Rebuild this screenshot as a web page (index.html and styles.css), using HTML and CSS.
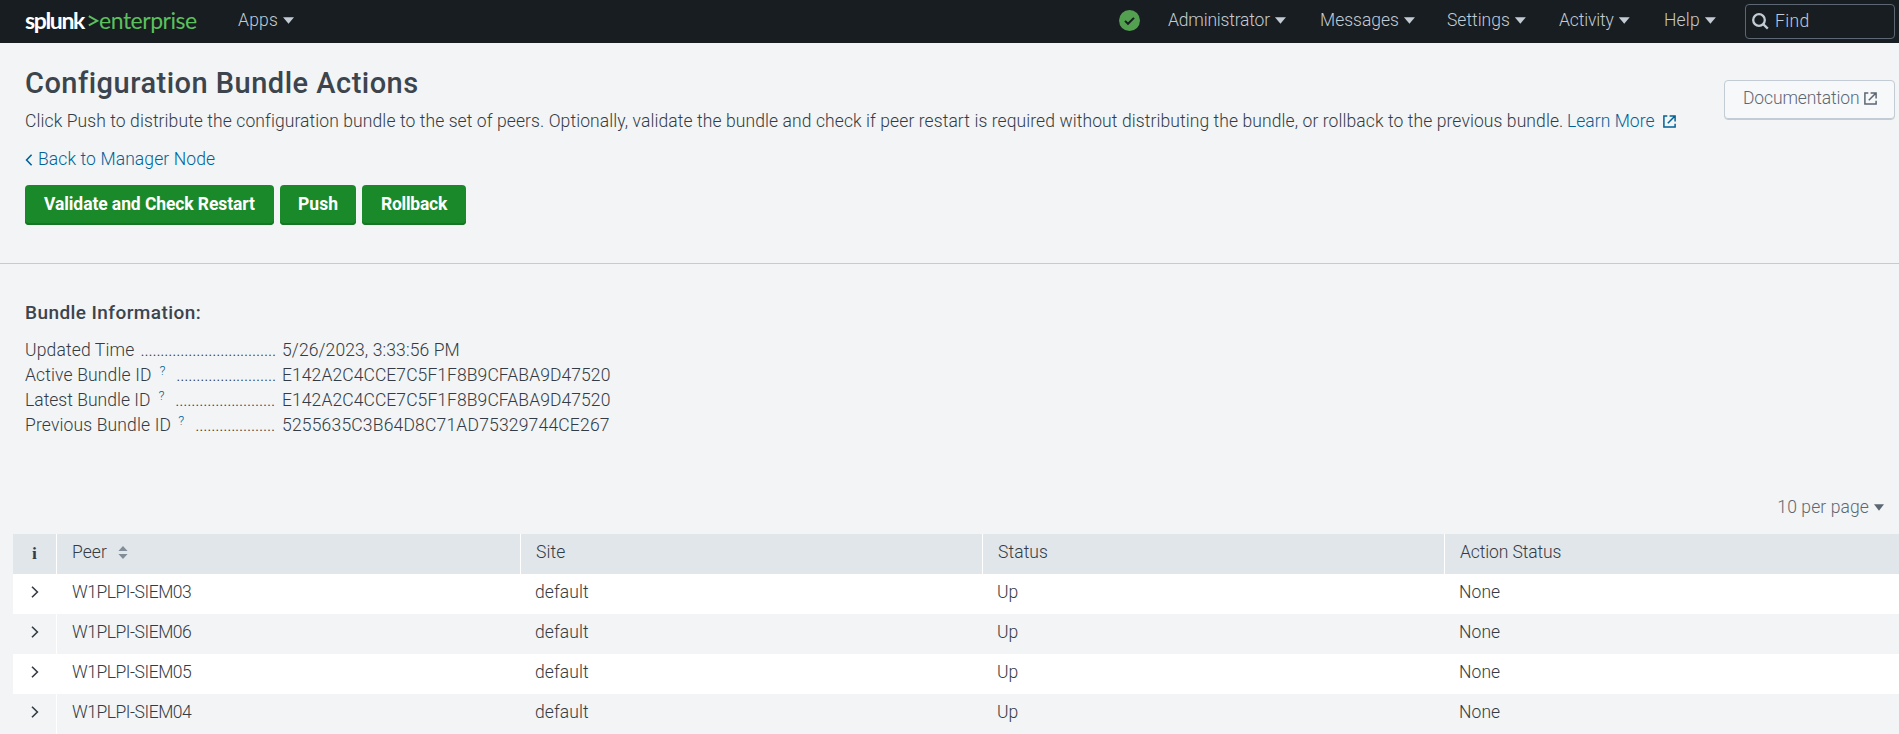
FILE: index.html
```html
<!DOCTYPE html>
<html lang="en">
<head>
<meta charset="utf-8">
<title>Configuration Bundle Actions | Splunk</title>
<link rel="stylesheet" href="styles.css">
</head>
<body>
<header class="navbar">
  <a class="logo"><span class="logo-name">splunk</span><svg class="logo-mark" viewBox="0 0 11 12"><path d="M.8 1.2 9.3 5.8.8 10.4" /></svg><span class="logo-product">enterprise</span></a>
  <a class="nav-item nav-apps"><span class="t-apps">Apps</span><i class="caret"></i></a>
  <svg class="health" viewBox="0 0 21 21"><circle cx="10.5" cy="10.5" r="10.5"/><path d="M6 10.9 9 13.8 15 7.9"/></svg>
  <a class="nav-item nav-admin"><span class="t-admin">Administrator</span><i class="caret"></i></a>
  <a class="nav-item nav-messages"><span>Messages</span><i class="caret"></i></a>
  <a class="nav-item nav-settings"><span class="t-settings">Settings</span><i class="caret"></i></a>
  <a class="nav-item nav-activity"><span class="t-activity">Activity</span><i class="caret"></i></a>
  <a class="nav-item nav-help"><span class="t-help">Help</span><i class="caret"></i></a>
  <div class="find"><svg class="find-icon" viewBox="0 0 17 17"><circle cx="7" cy="7" r="5.8"/><path d="M11.2 11.2 15.8 15.6"/></svg><span class="t-find">Find</span></div>
</header>

<section class="page-head">
  <div class="head-main">
    <h1>Configuration Bundle Actions</h1>
    <p class="desc"><span class="t-desc">Click Push to distribute the configuration bundle to the set of peers. Optionally, validate the bundle and check if peer restart is required without distributing the bundle, or rollback to the previous bundle.</span><a class="link learn">Learn More</a><svg class="ext link" viewBox="0 0 13 13"><path d="M4.3 1H.9v11.1h11.2V8.7M6.6.9h5.5v5.5M12 1 4.8 8.2"/></svg></p>
    <a class="link back"><svg class="chev-left" viewBox="0 0 8 12"><path d="M6.6.8 1.6 6l5 5.2"/></svg><span class="t-back">Back to Manager Node</span></a>
    <div class="actions">
      <button class="btn btn-validate">Validate and Check Restart</button>
      <button class="btn btn-push">Push</button>
      <button class="btn btn-rollback">Rollback</button>
    </div>
  </div>
  <a class="doc-btn"><span class="t-doc">Documentation</span><svg class="ext" viewBox="0 0 13 13"><path d="M4.3 1H.9v11.1h11.2V8.7M6.6.9h5.5v5.5M12 1 4.8 8.2"/></svg></a>
</section>

<section class="bundle">
  <h2>Bundle Information:</h2>
  <dl class="info">
    <dt><span class="t-info">Updated Time</span><span class="dots">..................................</span></dt><dd class="t-time">5/26/2023, 3:33:56 PM</dd>
    <dt><span class="t-info">Active Bundle ID</span><a class="help">?</a><span class="dots">.........................</span></dt><dd>E142A2C4CCE7C5F1F8B9CFABA9D47520</dd>
    <dt><span class="t-info t-latest">Latest Bundle ID</span><a class="help">?</a><span class="dots dots-latest">.........................</span></dt><dd>E142A2C4CCE7C5F1F8B9CFABA9D47520</dd>
    <dt><span class="t-info">Previous Bundle ID</span><a class="help">?</a><span class="dots dots-latest">....................</span></dt><dd class="t-prev">5255635C3B64D8C71AD75329744CE267</dd>
  </dl>
</section>

<div class="pager"><span class="t-page">10 per page</span><i class="caret"></i></div>

<table class="peers">
  <colgroup><col class="col-info"><col class="col-peer"><col class="col-site"><col class="col-status"><col></colgroup>
  <thead>
    <tr><th class="cell-info">i</th><th>Peer<svg class="sort" viewBox="0 0 10 13"><path d="M5 0 9.6 5H.4zM5 13 .4 8h9.2z"/></svg></th><th>Site</th><th>Status</th><th class="t-action">Action Status</th></tr>
  </thead>
  <tbody>
    <tr><td class="cell-info"><svg class="chev-right" viewBox="0 0 8 12"><path d="M1 .7 6.4 6 1 11.3"/></svg></td><td class="t-peer">W1PLPI-SIEM03</td><td>default</td><td>Up</td><td>None</td></tr>
    <tr><td class="cell-info"><svg class="chev-right" viewBox="0 0 8 12"><path d="M1 .7 6.4 6 1 11.3"/></svg></td><td class="t-peer">W1PLPI-SIEM06</td><td>default</td><td>Up</td><td>None</td></tr>
    <tr><td class="cell-info"><svg class="chev-right" viewBox="0 0 8 12"><path d="M1 .7 6.4 6 1 11.3"/></svg></td><td class="t-peer">W1PLPI-SIEM05</td><td>default</td><td>Up</td><td>None</td></tr>
    <tr><td class="cell-info"><svg class="chev-right" viewBox="0 0 8 12"><path d="M1 .7 6.4 6 1 11.3"/></svg></td><td class="t-peer">W1PLPI-SIEM04</td><td>default</td><td>Up</td><td>None</td></tr>
  </tbody>
</table>
</body>
</html>
```

FILE: styles.css
```css
* { box-sizing: border-box; }
body {
  margin: 0;
  height: 734px;
  overflow: hidden;
  background: #f2f4f5;
  color: #333b44;
  font: 300 17.5px/25px Roboto, "Open Sans", sans-serif;
}
svg { fill: none; stroke: currentColor; flex: none; }

/* Navigation bar */
.navbar {
  display: flex;
  align-items: center;
  height: 43px;
  padding: 0 4px 2px 25px;
  background: #171d21;
  color: #c3cbd4;
  white-space: nowrap;
}
.logo { display: flex; align-items: center; width: 213px; font: 23px/25px Lato, sans-serif; color: #5cc05c; }
.logo-name { color: #fff; font-weight: 700; letter-spacing: -1.37px; width: 63px; }
.logo-mark { width: 11px; height: 12px; stroke-width: 1.9; }
.logo-product { font-weight: 400; letter-spacing: -0.47px; }
.nav-item { display: flex; align-items: center; }
.caret {
  width: 11px;
  height: 6.5px;
  margin-left: 5px;
  background: currentColor;
  clip-path: polygon(0 0, 100% 0, 50% 100%);
}
.nav-apps { width: 881px; }
.t-apps { letter-spacing: 0.2px; }
.health { width: 21px; height: 21px; margin-right: 28px; color: #171d21; stroke-width: 2; }
.health circle { fill: #53a051; stroke: none; }
.nav-admin { width: 152px; }
.t-admin { letter-spacing: -0.18px; }
.nav-messages { width: 127px; }
.nav-settings { width: 112px; }
.nav-activity { width: 105px; }
.t-activity { letter-spacing: -0.14px; }
.nav-help { width: 81px; }
.t-help { letter-spacing: 0.2px; }
.find {
  display: flex;
  align-items: center;
  width: 150px;
  height: 35px;
  margin-top: 2px;
  padding: 0 0 1px 6px;
  border: 1px solid #5c6773;
  border-radius: 4px;
}
.find-icon { width: 17px; height: 17px; margin-right: 6px; stroke-width: 2.3; }
.t-find { letter-spacing: 0.37px; }

/* Page heading */
.page-head {
  display: flex;
  justify-content: space-between;
  align-items: flex-start;
  height: 221px;
  padding: 22px 4px 0 25px;
  border-bottom: 1px solid #c3cbd4;
}
h1 { margin: 0; color: #3c444d; font-size: 29px; line-height: 36px; font-weight: 500; letter-spacing: 0.49px; }
.desc { display: flex; align-items: center; margin: 8px 0 0; white-space: nowrap; }
.t-desc { letter-spacing: 0.094px; width: 1542px; }
.link { color: #006297; }
.learn { letter-spacing: 0.04px; }
.ext { width: 13px; height: 13px; stroke-width: 1.5; }
.desc .ext { margin-left: 8px; }
.back { display: flex; align-items: center; margin-top: 13px; }
.chev-left { width: 8px; height: 12px; margin-right: 5px; stroke-width: 1.6; }
.t-back { letter-spacing: 0.11px; }
.actions { display: flex; gap: 6px; margin-top: 13px; }
.btn {
  height: 40px;
  padding: 0 0 2px;
  border: 0;
  border-radius: 4px;
  background: #1a8929;
  box-shadow: inset 0 -2px 0 #197426;
  color: #fff;
  font: 700 17.5px/24px Roboto, "Open Sans", sans-serif;
}
.btn-validate { width: 249px; letter-spacing: -0.09px; }
.btn-push { width: 76px; }
.btn-rollback { width: 104px; letter-spacing: -0.24px; }
.doc-btn {
  display: flex;
  align-items: center;
  gap: 5px;
  width: 171px;
  height: 40px;
  margin-top: 15px;
  padding: 0 0 3px 18px;
  border: 1px solid #c3cbd4;
  border-radius: 4px;
  box-shadow: inset 0 -1px 0 #c3cbd4;
  background: #f7f8fa;
  color: #5c6773;
}
.t-doc { letter-spacing: -0.13px; }

/* Bundle details */
.bundle { padding: 36px 25px 0; height: 230px; }
h2 { margin: 0; color: #3c444d; font-size: 19px; line-height: 25px; font-weight: 500; letter-spacing: 0.42px; }
.info { display: grid; grid-template-columns: 257px auto; margin: 13px 0 0; }
.info dt { display: flex; justify-content: flex-end; padding-right: 6px; white-space: nowrap; }
.info dd { margin: 0; letter-spacing: 0.08px; }
.t-info { margin-right: auto; letter-spacing: 0.15px; }
.info .t-latest { letter-spacing: 0.02px; }
.info .t-time { letter-spacing: 0.11px; }
.info .t-prev { letter-spacing: 0.19px; }
.help { margin: -5px 11px 0 0; font-size: 13px; color: #006297; }
.dots { letter-spacing: -0.2px; }
.dots-latest { margin-right: 1px; }

/* Peer table */
.pager {
  display: flex;
  justify-content: flex-end;
  align-items: center;
  height: 40px;
  padding: 0 15px 13px 0;
  color: #5c6773;
}
.t-page { letter-spacing: 0.11px; }
.pager .caret { width: 10px; }
.peers {
  width: 1886px;
  margin-left: 13px;
  border-collapse: separate;
  border-spacing: 0;
  table-layout: fixed;
  background: #fff;
}
.col-info { width: 43px; }
.col-peer { width: 464px; }
.col-site, .col-status { width: 462px; }
.peers th, .peers td { height: 40px; padding: 0 0 3px 15px; text-align: left; font-weight: 300; letter-spacing: 0.08px; }
.peers th { background: #e1e6eb; border-left: 1px solid #fff; }
.peers th:first-child { border-left: 0; }
.peers tbody tr:nth-child(even) td { background: #f2f4f5; }
.peers td.cell-info + td { border-left: 1px solid #fff; }
.peers .cell-info { padding: 0 0 3px; text-align: center; }
.peers th.cell-info { font: 700 17.5px/20px "Liberation Serif", serif; }
.peers td.t-peer { letter-spacing: -0.47px; }
.peers th.t-action { letter-spacing: -0.11px; }
.chev-right { width: 8px; height: 12px; stroke-width: 1.6; }
.sort { width: 10px; height: 13px; margin-left: 11px; vertical-align: -1px; fill: #818d99; stroke: none; }
```
